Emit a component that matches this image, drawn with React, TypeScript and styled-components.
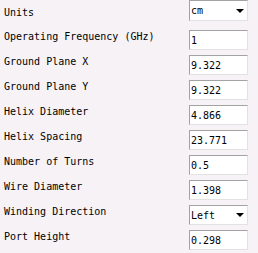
import React from 'react';
import styled, { createGlobalStyle } from 'styled-components';

const GlobalStyle = createGlobalStyle`
  html, body {
    margin: 0;
    padding: 0;
    background: #f6f2f6;
  }
  body {
    width: 258px;
    height: 253px;
    overflow: hidden;
    font-family: 'DejaVu Sans Mono', 'Liberation Mono', monospace;
    font-size: 10px;
    color: #000;
  }
`;

const Panel = styled.div`
  width: 258px;
  height: 253px;
  display: flex;
  flex-direction: column;
  background: #f6f2f6;
`;

const Row = styled.div<{ $first?: boolean }>`
  height: 25px;
  display: flex;
  align-items: flex-start;
  padding-top: ${p => (p.$first ? 0 : 5)}px;
  box-sizing: border-box;
`;

const Label = styled.div<{ $first?: boolean }>`
  width: 185px;
  padding-left: 4px;
  margin-top: ${p => (p.$first ? 6 : 0)}px;
  line-height: 13px;
  white-space: nowrap;
`;

const Field = styled.input`
  width: 59px;
  height: 20px;
  box-sizing: border-box;
  margin: 0;
  padding: 0 0 0 1px;
  background: #fff;
  border: 1px solid #e2e2e2;
  border-top-color: #a3a3a3;
  border-left-color: #a3a3a3;
  border-radius: 0;
  font-family: 'DejaVu Sans Mono', 'Liberation Mono', monospace;
  font-size: 10px;
  color: #000;
  outline: none;
`;

const Select = styled.div<{ $tall?: boolean }>`
  width: 59px;
  height: ${p => (p.$tall ? 21 : 20)}px;
  box-sizing: border-box;
  display: flex;
  align-items: center;
  justify-content: space-between;
  padding: 0 3px 0 1px;
  background: #fff;
  border: 1px solid #e2e2e2;
  border-top-color: #a3a3a3;
  border-left-color: #a3a3a3;
  font-size: 10px;
`;

const Arrow = styled.span`
  width: 0;
  height: 0;
  border-left: 4px solid transparent;
  border-right: 4px solid transparent;
  border-top: 4px solid #000;
`;

const fields: [string, string][] = [
  ['Operating Frequency (GHz)', '1'],
  ['Ground Plane X', '9.322'],
  ['Ground Plane Y', '9.322'],
  ['Helix Diameter', '4.866'],
  ['Helix Spacing', '23.771'],
  ['Number of Turns', '0.5'],
  ['Wire Diameter', '1.398'],
];

const App = () => {
  return (
    <Panel>
      <GlobalStyle />
      <Row $first>
        <Label $first>Units</Label>
        <Select $tall>
          <span>cm</span>
          <Arrow />
        </Select>
      </Row>
      {fields.map(([name, value]) => (
        <Row key={name}>
          <Label>{name}</Label>
          <Field defaultValue={value} />
        </Row>
      ))}
      <Row>
        <Label>Winding Direction</Label>
        <Select>
          <span>Left</span>
          <Arrow />
        </Select>
      </Row>
      <Row>
        <Label>Port Height</Label>
        <Field defaultValue="0.298" />
      </Row>
    </Panel>
  );
};

export default App;
